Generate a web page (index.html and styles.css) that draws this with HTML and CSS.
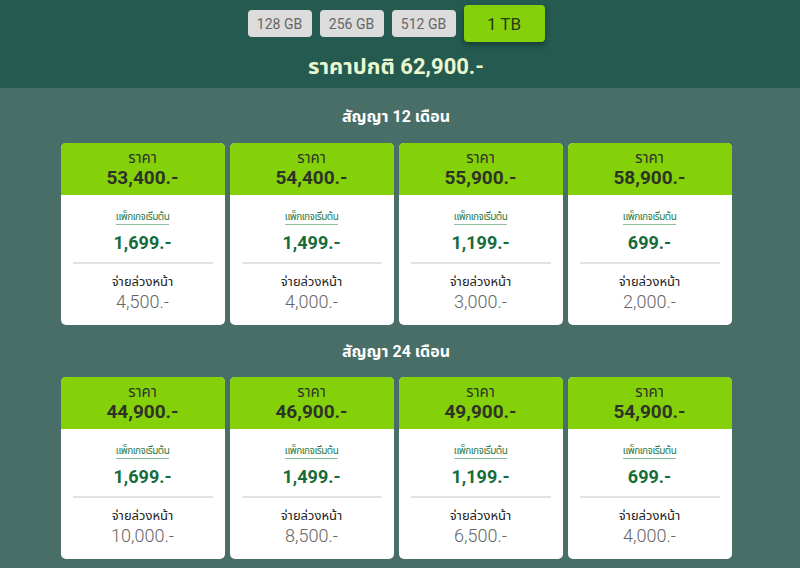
FILE: index.html
```html
<!DOCTYPE html>
<html lang="th">
<head>
<meta charset="utf-8">
<title>ราคา</title>
<link rel="stylesheet" href="styles.css">
</head>
<body>
<header class="top">
  <div class="caps">
    <button class="cap">128 GB</button>
    <button class="cap">256 GB</button>
    <button class="cap">512 GB</button>
    <button class="cap active">1 TB</button>
  </div>
  <h1 class="normal">ราคาปกติ 62,900.-</h1>
</header>
<main class="body">
  <h2 class="term first">สัญญา 12 เดือน</h2>
  <div class="grid">
    <div class="card"><div class="head"><div class="lbl">ราคา</div><div class="price">53,400.-</div></div><div class="main"><div class="pk">แพ็กเกจเริ่มต้น</div><div class="pkp">1,699.-</div><div class="sep"></div><div class="adv">จ่ายล่วงหน้า</div><div class="advp">4,500.-</div></div></div>
    <div class="card"><div class="head"><div class="lbl">ราคา</div><div class="price">54,400.-</div></div><div class="main"><div class="pk">แพ็กเกจเริ่มต้น</div><div class="pkp">1,499.-</div><div class="sep"></div><div class="adv">จ่ายล่วงหน้า</div><div class="advp">4,000.-</div></div></div>
    <div class="card"><div class="head"><div class="lbl">ราคา</div><div class="price">55,900.-</div></div><div class="main"><div class="pk">แพ็กเกจเริ่มต้น</div><div class="pkp">1,199.-</div><div class="sep"></div><div class="adv">จ่ายล่วงหน้า</div><div class="advp">3,000.-</div></div></div>
    <div class="card"><div class="head"><div class="lbl">ราคา</div><div class="price">58,900.-</div></div><div class="main"><div class="pk">แพ็กเกจเริ่มต้น</div><div class="pkp">699.-</div><div class="sep"></div><div class="adv">จ่ายล่วงหน้า</div><div class="advp">2,000.-</div></div></div>
  </div>
  <h2 class="term second">สัญญา 24 เดือน</h2>
  <div class="grid">
    <div class="card"><div class="head"><div class="lbl">ราคา</div><div class="price">44,900.-</div></div><div class="main"><div class="pk">แพ็กเกจเริ่มต้น</div><div class="pkp">1,699.-</div><div class="sep"></div><div class="adv">จ่ายล่วงหน้า</div><div class="advp">10,000.-</div></div></div>
    <div class="card"><div class="head"><div class="lbl">ราคา</div><div class="price">46,900.-</div></div><div class="main"><div class="pk">แพ็กเกจเริ่มต้น</div><div class="pkp">1,499.-</div><div class="sep"></div><div class="adv">จ่ายล่วงหน้า</div><div class="advp">8,500.-</div></div></div>
    <div class="card"><div class="head"><div class="lbl">ราคา</div><div class="price">49,900.-</div></div><div class="main"><div class="pk">แพ็กเกจเริ่มต้น</div><div class="pkp">1,199.-</div><div class="sep"></div><div class="adv">จ่ายล่วงหน้า</div><div class="advp">6,500.-</div></div></div>
    <div class="card"><div class="head"><div class="lbl">ราคา</div><div class="price">54,900.-</div></div><div class="main"><div class="pk">แพ็กเกจเริ่มต้น</div><div class="pkp">699.-</div><div class="sep"></div><div class="adv">จ่ายล่วงหน้า</div><div class="advp">4,000.-</div></div></div>
  </div>
</main>
</body>
</html>
```
FILE: styles.css
```css
html, body { margin: 0; padding: 0; }
body {
  width: 800px; height: 568px; overflow: hidden;
  background: #486e67;
  font-family: "Roboto", "Noto Sans Thai", "Noto Sans", "DejaVu Sans", sans-serif;
}
.top {
  background: #245a50;
  height: 88px;
  display: flex; flex-direction: column; align-items: center;
  box-sizing: border-box;
  padding: 5px 8px 0 0;
}
.caps { display: flex; align-items: center; gap: 8px; height: 37px; }
.cap {
  font-family: "Roboto", sans-serif;
  width: 64px; height: 27px;
  border: 0; border-radius: 4px;
  background: #dcdcdc; color: #666; font-size: 14px;
  padding: 0;
}
.cap.active {
  width: 81px; height: 37px;
  background: #84d10a; color: #2a3a18; font-size: 17px;
  box-shadow: 0 3px 5px rgba(0,0,0,0.35);
}
.normal {
  margin: 12px 0 0; font-size: 22px; font-weight: 700; color: #eaf7cf; line-height: 26px;
}
.term {
  margin: 0; text-align: center; color: #fff; font-size: 16px; font-weight: 700;
  line-height: 20px;
}
.term.first { padding: 19px 0 16px; }
.term.second { padding: 17px 0 15px; }
.body { padding-right: 8px; }
.grid { display: grid; grid-template-columns: repeat(4, 164px); gap: 5px; justify-content: center; }
.card {
  background: #fff; border-radius: 5px; overflow: hidden; height: 182px;
  text-align: center;
}
.head { background: #84d10a; height: 52px; box-sizing: border-box; padding-top: 6px; color: #2e3326; }
.lbl { font-size: 15px; line-height: 18px; }
.price { font-size: 19px; font-weight: 700; line-height: 22px; }
.main { padding-top: 10px; }
.pk { display: inline-block; font-size: 10px; color: #2a7a4a; line-height: 14px; border-bottom: 1px solid #8bbf9e; letter-spacing: -0.5px; }
.pkp { font-size: 18px; font-weight: 700; color: #176b3a; line-height: 24px; margin-top: 6px; }
.sep { height: 2px; background: #e2e2e2; margin: 7px 12px 9px; }
.adv { font-size: 13px; color: #222; line-height: 18px; }
.advp { font-size: 18px; font-weight: 300; color: #666; line-height: 22px; }
```
